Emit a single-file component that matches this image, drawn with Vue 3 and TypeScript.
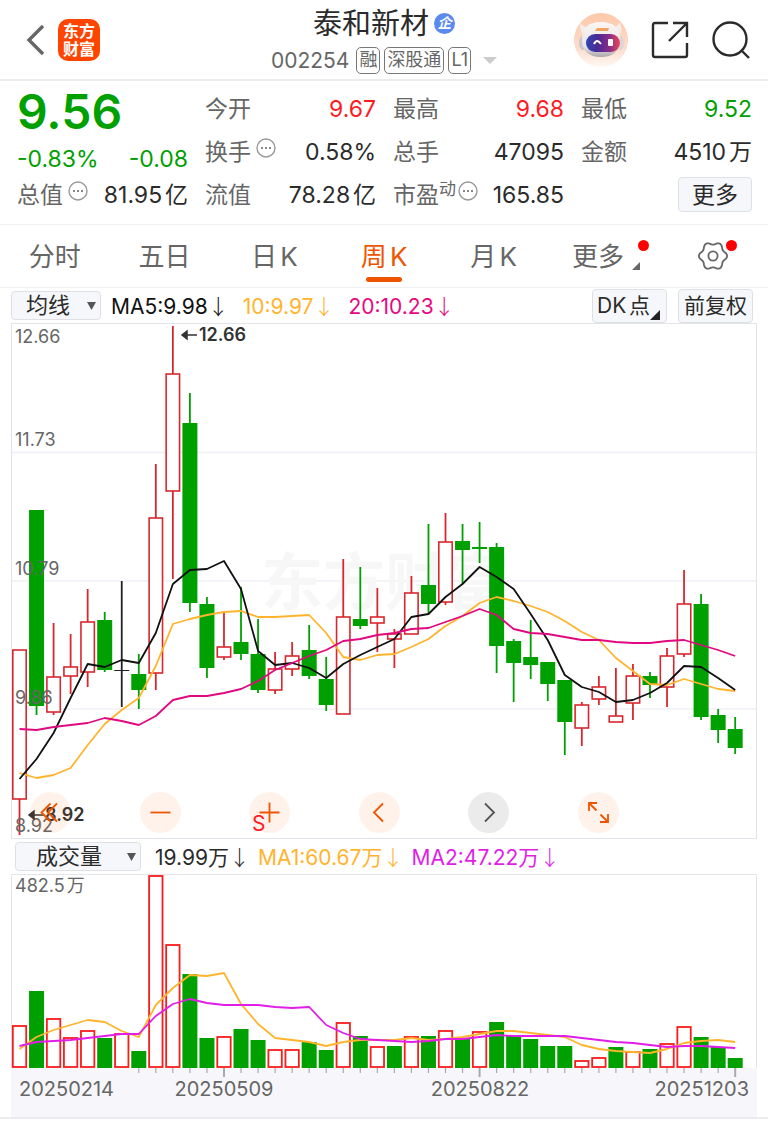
<script setup lang="ts">
import { ref } from 'vue'

type Tone = 'up' | 'down' | 'flat'
type Candle = [tone: Tone, high: number, top: number, bottom: number, low: number]

const tabs = ['分时', '五日', '日K', '周K', '月K']
const activeTab = ref('周K')
const overlay = ref('均线')
const indicator = ref('成交量')

const candles: Candle[] = [
  ['up', 650, 650, 799, 835], ['down', 510, 510, 706, 715], ['up', 623, 677, 712, 715],
  ['up', 634, 667, 676, 694], ['up', 589, 622, 672, 687], ['down', 612, 620, 670, 672],
  ['flat', 581, 670, 671, 707], ['down', 654, 674, 690, 709], ['up', 464, 518, 673, 690],
  ['up', 326, 374, 491, 579], ['down', 393, 423, 603, 612], ['down', 597, 604, 668, 678],
  ['up', 611, 647, 657, 660], ['down', 587, 642, 654, 660], ['down', 619, 654, 690, 693],
  ['up', 652, 669, 690, 694], ['up', 642, 656, 669, 676], ['down', 625, 650, 676, 679],
  ['down', 657, 679, 705, 711], ['up', 559, 617, 714, 714], ['down', 567, 619, 626, 629],
  ['up', 588, 617, 623, 652], ['up', 629, 634, 639, 668], ['up', 576, 593, 634, 634],
  ['down', 524, 585, 604, 614], ['up', 513, 542, 602, 605], ['down', 524, 541, 550, 584],
  ['down', 522, 547, 549, 563], ['down', 543, 547, 646, 673], ['down', 639, 641, 663, 702],
  ['down', 620, 657, 665, 679], ['down', 662, 662, 684, 701], ['down', 680, 680, 722, 755],
  ['up', 702, 705, 728, 746], ['up', 676, 687, 699, 705], ['up', 668, 716, 722, 722],
  ['up', 664, 676, 703, 720], ['down', 672, 676, 685, 698], ['up', 648, 656, 687, 707],
  ['up', 570, 604, 654, 657], ['down', 594, 604, 717, 720], ['down', 709, 715, 730, 743],
  ['down', 717, 729, 748, 754],
]

const ma5 = [779, 759, 733, 698, 664, 667, 660, 663, 633, 584, 570, 569, 561, 589, 651, 665, 663, 668, 678, 664, 655, 647, 639, 617, 614, 597, 584, 567, 577, 589, 614, 640, 675, 687, 692, 702, 700, 693, 683, 666, 667, 678, 690]
const ma10 = [773, 778, 775, 768, 745, 724, 710, 698, 666, 624, 619, 615, 612, 611, 617, 617, 616, 615, 633, 657, 660, 655, 654, 647, 639, 626, 616, 603, 597, 601, 606, 612, 621, 632, 640, 658, 671, 684, 685, 679, 684, 689, 691]
const ma20 = [729, 730, 727, 725, 723, 718, 721, 725, 716, 700, 696, 696, 693, 689, 681, 670, 663, 656, 650, 641, 639, 635, 633, 629, 628, 622, 616, 609, 615, 629, 633, 634, 637, 640, 640, 642, 643, 643, 641, 640, 645, 650, 656]

const volumes = [1026, 991, 1019, 1038, 1031, 1038, 1034, 1051, 876, 945, 974, 1038, 1037, 1029, 1040, 1050, 1050, 1042, 1050, 1023, 1036, 1047, 1046, 1037, 1036, 1031, 1038, 1032, 1022, 1036, 1039, 1046, 1046, 1061, 1058, 1047, 1052, 1049, 1044, 1027, 1037, 1047, 1058]
// Weeks whose volume bar colour differs from the candle's
const flippedVolumes = new Set([22, 27, 35])
const vol5 = [1049, 1037, 1030, 1025, 1020, 1022, 1031, 1037, 1005, 988, 975, 976, 973, 1004, 1024, 1038, 1040, 1042, 1046, 1042, 1040, 1040, 1040, 1038, 1040, 1039, 1037, 1034, 1031, 1031, 1033, 1035, 1037, 1045, 1049, 1051, 1052, 1053, 1049, 1043, 1041, 1040, 1042]
const vol10 = [1046, 1042, 1041, 1040, 1038, 1036, 1034, 1034, 1016, 1004, 999, 1003, 1005, 1005, 1005, 1007, 1008, 1007, 1025, 1033, 1039, 1040, 1041, 1042, 1041, 1039, 1039, 1037, 1035, 1036, 1036, 1036, 1036, 1038, 1040, 1042, 1043, 1045, 1047, 1046, 1046, 1047, 1048]

const BASE = 1068
const cx = (i: number): number => 19.5 + i * 17.04
const line = (ys: number[]): string => ys.map((y, i) => `${cx(i).toFixed(1)},${y}`).join(' ')
const ticks = candles.map((_, i) => i).filter((i) => i >= 7)
const isMajor = (i: number): boolean => i % 15 === 12
const isFalling = (i: number): boolean => (candles[i][0] === 'down') !== flippedVolumes.has(i)

const priceLabels = [
  { text: '12.66', y: 343 }, { text: '11.73', y: 446 }, { text: '10.79', y: 575 },
  { text: '9.86', y: 704 }, { text: '8.92', y: 832 },
]

const gear = Array.from({ length: 96 }, (_, k) => {
  const a = (k / 96) * Math.PI * 2
  const r = 12.7 + 1.4 * Math.cos(a * 6)
  return `${(16 + r * Math.cos(a)).toFixed(2)},${(16 + r * Math.sin(a)).toFixed(2)}`
}).join(' ')
</script>

<template>
  <main class="page">
    <header class="top">
      <div class="top-left">
        <button class="icon-btn" aria-label="返回">
          <svg width="20" height="32" viewBox="0 0 20 32"><path d="M17 2 3 16l14 14" fill="none" stroke="#666" stroke-width="3.4" /></svg>
        </button>
        <a class="logo" href="#"><span>东方</span><span>财富</span></a>
      </div>
      <div class="title">
        <h1>泰和新材<span class="badge">企</span></h1>
        <div class="code">
          <span class="num">002254</span>
          <span class="tag">融</span><span class="tag">深股通</span><span class="tag">L1</span>
          <svg class="caret" width="14" height="8" viewBox="0 0 14 8"><path d="M0 0h14L7 7z" fill="#ccc" /></svg>
        </div>
      </div>
      <div class="top-right">
        <button class="icon-btn" aria-label="助手">
          <svg width="54" height="54" viewBox="0 0 54 54">
            <defs>
              <linearGradient id="halo" x1="0" y1="0" x2="0" y2="1"><stop offset="0" stop-color="#fdc8a9" /><stop offset=".65" stop-color="#fddccb" /><stop offset="1" stop-color="#fff8f4" /></linearGradient>
              <linearGradient id="shell" x1="0" y1="0" x2="0" y2="1"><stop offset="0" stop-color="#fbf6f3" /><stop offset=".7" stop-color="#e9e5e6" /><stop offset="1" stop-color="#aaa6ab" /></linearGradient>
              <linearGradient id="visor" x1="0" y1="0" x2="1" y2="0"><stop offset="0" stop-color="#3145b4" /><stop offset=".35" stop-color="#4b2a92" /><stop offset=".7" stop-color="#8b2d88" /><stop offset="1" stop-color="#ee4754" /></linearGradient>
            </defs>
            <circle cx="27" cy="27" r="27" fill="url(#halo)" />
            <path d="M6 10c0 6 1 10 5 13l7-9c-5 1-9 0-12-4zM45 9c0 3-3 5-7 6l6 8c4-3 5-9 1-14z" fill="#f5edea" />
            <ellipse cx="9" cy="30" rx="4" ry="7" fill="#c9c6cc" /><ellipse cx="46" cy="30" rx="4" ry="7" fill="#dcd4d6" />
            <path d="M27 9c13 0 19 6 19 18 0 11-7 17-19 17S8 38 8 27C8 15 14 9 27 9z" fill="url(#shell)" />
            <path d="M23 15h12l-1 3H21z" fill="#f0a45e" />
            <rect x="12" y="21" width="34" height="18" rx="9" fill="url(#visor)" />
            <path d="M20 31c2-4 4-4 7 0" fill="none" stroke="#fff" stroke-width="2" /><rect x="34" y="26" width="5" height="7" rx="1" fill="#fff" />
          </svg>
        </button>
        <button class="icon-btn" aria-label="分享">
          <svg width="38" height="38" viewBox="0 0 38 38" fill="none" stroke="#2b2b2b" stroke-width="2.4"><path d="M17 2H4Q2 2 2 4v30q0 2 2 2h30q2 0 2-2V22M22 2h14v14M36 2 18 20" /></svg>
        </button>
        <button class="icon-btn" aria-label="搜索">
          <svg width="38" height="38" viewBox="0 0 38 38" fill="none" stroke="#2b2b2b" stroke-width="2.4"><circle cx="18" cy="18" r="16.5" /><path d="m29 29 8 8" /></svg>
        </button>
      </div>
    </header>

    <section class="quote">
      <div class="price down">
        <strong>9.56</strong>
        <div class="change"><span>-0.83%</span><span>-0.08</span></div>
      </div>
      <div class="cell"><span class="label">今开</span><span class="value rise">9.67</span></div>
      <div class="cell"><span class="label">最高</span><span class="value rise">9.68</span></div>
      <div class="cell"><span class="label">最低</span><span class="value down">9.52</span></div>
      <div class="cell"><span class="label">换手<svg class="info" width="20" height="20" viewBox="0 0 20 20"><circle cx="10" cy="10" r="9" fill="none" stroke="#999" stroke-width="1.4" /><path d="M5 10h2M9 10h2M13 10h2" stroke="#888" stroke-width="2" /></svg></span><span class="value">0.58%</span></div>
      <div class="cell"><span class="label">总手</span><span class="value">47095</span></div>
      <div class="cell"><span class="label">金额</span><span class="value">4510万</span></div>
      <div class="cell"><span class="label">总值<svg class="info" width="20" height="20" viewBox="0 0 20 20"><circle cx="10" cy="10" r="9" fill="none" stroke="#999" stroke-width="1.4" /><path d="M5 10h2M9 10h2M13 10h2" stroke="#888" stroke-width="2" /></svg></span><span class="value">81.95亿</span></div>
      <div class="cell"><span class="label">流值</span><span class="value">78.28亿</span></div>
      <div class="cell"><span class="label pe">市盈<small>动</small><svg class="info" width="20" height="20" viewBox="0 0 20 20"><circle cx="10" cy="10" r="9" fill="none" stroke="#999" stroke-width="1.4" /><path d="M5 10h2M9 10h2M13 10h2" stroke="#888" stroke-width="2" /></svg></span><span class="value">165.85</span></div>
      <div class="cell end"><button class="more">更多</button></div>
    </section>

    <nav class="tabs">
      <button v-for="t in tabs" :key="t" class="tab" :class="{ active: t === activeTab }" @click="activeTab = t">{{ t }}</button>
      <button class="tab"><span class="with-dot">更多<svg class="corner" width="8" height="8" viewBox="0 0 8 8"><path d="M8 0v8H0z" fill="#666" /></svg><i class="dot"></i></span></button>
      <button class="tab" aria-label="设置">
        <span class="gear"><svg width="32" height="32" viewBox="0 0 32 32" fill="none" stroke="#666" stroke-width="1.8"><polygon :points="gear" /><circle cx="16" cy="16" r="4.6" /></svg><i class="dot"></i></span>
      </button>
    </nav>

    <div class="legend">
      <label class="pick"><select v-model="overlay" aria-label="主图指标"><option>均线</option></select><svg width="9" height="8" viewBox="0 0 9 8"><path d="M0 0h9L4.500 8z" fill="#555" /></svg></label>
      <span class="ma ma-a">MA5:9.98<b>↓</b></span>
      <span class="ma ma-b">10:9.97<b>↓</b></span>
      <span class="ma ma-c">20:10.23<b>↓</b></span>
      <div class="actions">
        <button class="act dk">DK点<svg width="10" height="10" viewBox="0 0 10 10"><path d="M10 0v10H0z" fill="#222" /></svg></button>
        <button class="act">前复权</button>
      </div>
    </div>

    <section class="chart">
      <svg viewBox="11 323 746 516" role="img" aria-label="周K线">
        <rect x="11.500" y="323.500" width="745" height="515" fill="#fff" stroke="#e3e3ea" />
        <path d="M12 452.500H756M12 581H756M12 709H756" stroke="#efeff7" stroke-width="1.500" />
        <text x="261" y="605" class="mark">东方财富</text>
        <g v-for="([tone, high, top, bottom, low], i) in candles" :key="i" :class="tone">
          <line :x1="cx(i)" :x2="cx(i)" :y1="high" :y2="low" class="wick" />
          <rect v-if="tone === 'up'" :x="cx(i) - 6.7" :y="top" width="13.400" :height="bottom - top" class="hollow" />
          <rect v-else :x="cx(i) - 7.500" :y="top" width="15" :height="bottom - top" class="solid" />
        </g>
        <polyline :points="line(ma10)" class="ln amber" />
        <polyline :points="line(ma5)" class="ln black" />
        <polyline :points="line(ma20)" class="ln pink" />
        <text v-for="p in priceLabels" :key="p.text" x="15" :y="p.y" class="axis">{{ p.text }}</text>
        <path d="M182 335h15M187 331l-5 4 5 4zM29 815h15M34 811l-5 4 5 4z" fill="#333" stroke="#333" stroke-width="1.500" />
        <text x="199" y="341" class="peak">12.66</text>
        <text x="45" y="821" class="peak">8.92</text>
      </svg>
      <div class="controls">
        <button aria-label="最左"><svg viewBox="0 0 41 41"><path d="M20.500 11.500l-9 9 9 9M27 11.500l-9 9 9 9" /></svg></button>
        <button aria-label="缩小"><svg viewBox="0 0 41 41"><path d="M10.500 20.500h20" /></svg></button>
        <button aria-label="放大"><svg viewBox="0 0 41 41"><path d="M10.500 20.500h20M20.500 10.500v20" /></svg></button>
        <button aria-label="左移"><svg viewBox="0 0 41 41"><path d="m24 11.500-9 9 9 9" /></svg></button>
        <button class="grey" aria-label="右移"><svg viewBox="0 0 41 41"><path d="m17 11.500 9 9-9 9" /></svg></button>
        <button aria-label="全屏"><svg viewBox="0 0 41 41"><path d="M11 19v-8h8M11.500 11.500l7 7M30 22v8h-8M29.500 29.500l-7-7" /></svg></button>
      </div>
      <span class="sell">S</span>
    </section>

    <div class="legend volume">
      <label class="pick wide"><select v-model="indicator" aria-label="副图指标"><option>成交量</option></select><svg width="9" height="8" viewBox="0 0 9 8"><path d="M0 0h9L4.500 8z" fill="#555" /></svg></label>
      <span class="ma vol-a">19.99万<b>↓</b></span>
      <span class="ma ma-b">MA1:60.67万<b>↓</b></span>
      <span class="ma vol-c">MA2:47.22万<b>↓</b></span>
    </div>

    <section class="chart bottom">
      <svg viewBox="11 874 746 243" role="img" aria-label="成交量">
        <rect x="11" y="1068" width="746" height="49" fill="#f7f7fb" />
        <path d="M11.500 1068V874.500H756.500V1068" fill="none" stroke="#e3e3ea" />
        <text x="15" y="892" class="axis">482.5万</text>
        <template v-for="(y, i) in volumes" :key="i">
          <rect v-if="isFalling(i)" :x="cx(i) - 7.500" :y="y" width="15" :height="BASE - y" fill="#00a000" />
          <rect v-else :x="cx(i) - 6.7" :y="y" width="13.400" :height="BASE - 1 - y" class="vol-up" />
        </template>
        <line v-for="i in ticks" :key="i" :x1="cx(i)" :x2="cx(i)" :y1="BASE" :y2="isMajor(i) ? 1077 : 1073" stroke="#aaa" :stroke-width="isMajor(i) ? 2 : 1.2" />
        <polyline :points="line(vol5)" class="ln amber" />
        <polyline :points="line(vol10)" class="ln violet" />
        <text x="19" y="1096" class="date">20250214</text>
        <text x="224" y="1096" class="date" text-anchor="middle">20250509</text>
        <text x="480" y="1096" class="date" text-anchor="middle">20250822</text>
        <text x="749" y="1096" class="date" text-anchor="end">20251203</text>
      </svg>
    </section>
  </main>
</template>

<style>
body { background: #fff; }
</style>

<style scoped>
.page { font-family: Inter, "Noto Sans CJK SC", sans-serif; color: #2b2b2b; text-autospace: normal; }
button, select { font: inherit; color: inherit; text-autospace: inherit; border: 0; background: none; padding: 0; margin: 0; cursor: pointer; }
svg { display: block; }

.top { display: grid; grid-template-columns: 1fr auto 1fr; align-items: center; height: 79px; border-bottom: 2px solid #ececee; }
.top-left { display: flex; align-items: center; gap: 12px; padding-left: 26px; }
.icon-btn { display: block; }
.logo { display: flex; flex-direction: column; align-items: center; justify-content: center; width: 42px; height: 42px; border-radius: 10px; background: #ff4400; color: #fff; text-decoration: none; font-weight: 700; font-size: 16px; line-height: 18px; }
.title { display: flex; flex-direction: column; align-items: center; }
h1 { display: flex; align-items: center; gap: 5px; margin: 0; font-weight: 400; font-size: 29px; line-height: 40px; }
.badge { width: 21px; height: 21px; border-radius: 50%; background: #5b8aec; color: #fff; font-size: 14px; line-height: 20px; font-weight: 700; font-style: italic; text-align: center; }
.code { display: flex; align-items: center; gap: 4px; height: 30px; margin-top: 2px; color: #666; font-size: 21px; line-height: 28px; }
.num { margin-right: 3px; }
.tag { box-sizing: border-box; height: 27px; padding: 0 2px; border: 1px solid #777; border-radius: 5px; font-size: 18px; line-height: 24px; }
.caret { margin-left: 8px; }
.top-right { display: flex; align-items: center; justify-content: flex-end; gap: 23px; padding-right: 18px; }

.quote { display: grid; grid-template-columns: repeat(4, minmax(0, 1fr)); grid-auto-rows: 43px; column-gap: 17px; padding: 6px 16px 8px 17px; border-bottom: 1px solid #f0f0f2; font-size: 23px; line-height: 32px; }
.price { grid-row: span 2; }
.price strong { display: block; font-size: 48px; line-height: 50px; font-weight: 600; }
.change { display: flex; justify-content: space-between; margin-top: 6px; }
.down { color: #00a000; }
.rise { color: #ff1a1f; }
.cell { display: flex; align-items: center; justify-content: space-between; white-space: nowrap; }
.label { display: flex; align-items: center; color: #666; }
.info { margin: 0 0 8px 5px; }
small { font-size: 17px; margin-bottom: 12px; }
.pe .info { margin-left: 2px; }
.end { justify-content: flex-end; }
.more { box-sizing: border-box; width: 74px; height: 35px; border: 1px solid #dfe0e6; border-radius: 4px; background: #f6f7fa; line-height: 32px; }

.tabs { display: grid; grid-template-columns: repeat(7, minmax(0, 1fr)); height: 62px; border-bottom: 1px solid #f0f0f2; font-size: 26px; color: #666; }
.tab { position: relative; display: flex; align-items: center; justify-content: center; padding-bottom: 4px; }
.tab:last-child { padding-bottom: 0; }
.tab.active { color: #ee5500; }
.tab.active::after { content: ""; position: absolute; left: 50%; bottom: 5px; width: 36px; height: 5px; margin-left: -18px; border-radius: 3px; background: #ee5500; }
.with-dot { position: relative; display: flex; align-items: flex-end; gap: 8px; padding-left: 5px; }
.corner { margin-bottom: 3px; }
.dot { position: absolute; top: 4px; right: -9px; width: 11px; height: 11px; border-radius: 50%; background: #f00; }
.gear { position: relative; }
.gear .dot { top: 0; right: -8px; }

.legend { display: flex; align-items: center; height: 35px; padding: 0 15px 0 11px; font-size: 21px; line-height: 28px; white-space: nowrap; text-autospace: no-autospace; }
.pick { position: relative; box-sizing: border-box; width: 90px; height: 29px; margin-right: 10px; border: 1px solid #dfe0e6; border-radius: 4px; background: #f6f7fa; }
.pick.wide { width: 126px; margin-right: 14px; }
.pick select { appearance: none; width: 100%; height: 26px; padding-left: 14px; font-size: 22px; line-height: 26px; }
.pick.wide select { padding-left: 20px; }
.pick svg { position: absolute; right: 4px; top: 10px; pointer-events: none; }
.ma { margin-right: 14px; }
.ma b { font-family: "Noto Sans CJK SC", sans-serif; font-weight: 300; }
.ma-a { color: #111; }
.ma-b { color: #ffb42e; }
.ma-c { color: #e5097f; }
.vol-c { color: #e01ee8; }
.volume { padding-left: 15px; }
.volume .ma { margin-right: 8px; }
.actions { display: flex; gap: 11px; margin-left: auto; }
.act { box-sizing: border-box; width: 75px; height: 34px; border: 1px solid #dfe0e6; border-radius: 4px; background: #f6f7fa; text-autospace: normal; }
.dk { display: flex; align-items: center; padding-left: 4px; }
.dk svg { align-self: flex-end; margin-bottom: 2px; }

.chart { position: relative; margin: 0 11px; }
.chart > svg { width: 100%; height: auto; }
.bottom { margin: 0; padding: 0 11px; border-bottom: 2px solid #ececf0; }
.mark { font-size: 62px; font-weight: 700; fill: #f7f7f8; }
.up .wick { stroke: #d8282f; }
.down .wick { stroke: #00a000; }
.flat .wick { stroke: #222; }
.wick { stroke-width: 1.8; }
.hollow { fill: #fff; stroke: #d8282f; stroke-width: 1.6; }
.down .solid { fill: #00a000; }
.flat .solid { fill: #222; }
.vol-up { fill: #fff; stroke: #fa1c1c; stroke-width: 1.8; }
.ln { fill: none; stroke-width: 1.8; stroke-linejoin: round; }
.black { stroke: #111; }
.amber { stroke: #ffb42e; }
.pink { stroke: #e0097f; }
.violet { stroke: #e01ee8; }
.axis { font-size: 18px; fill: #666; }
.peak { font-size: 18px; font-weight: 600; fill: #333; }
.date { font-size: 20px; fill: #666; }
.controls { position: absolute; left: 19px; right: 138px; bottom: 6px; display: flex; justify-content: space-between; }
.controls button { width: 41px; height: 41px; border-radius: 50%; background: rgba(238, 85, 0, .08); }
.controls svg { fill: none; stroke: #ee5500; stroke-width: 1.8; }
.controls .grey { background: rgba(0, 0, 0, .08); }
.controls .grey svg { stroke: #555; }
.sell { position: absolute; left: 241px; bottom: 1px; color: #ff1a1f; font-size: 21px; line-height: 28px; }
</style>
